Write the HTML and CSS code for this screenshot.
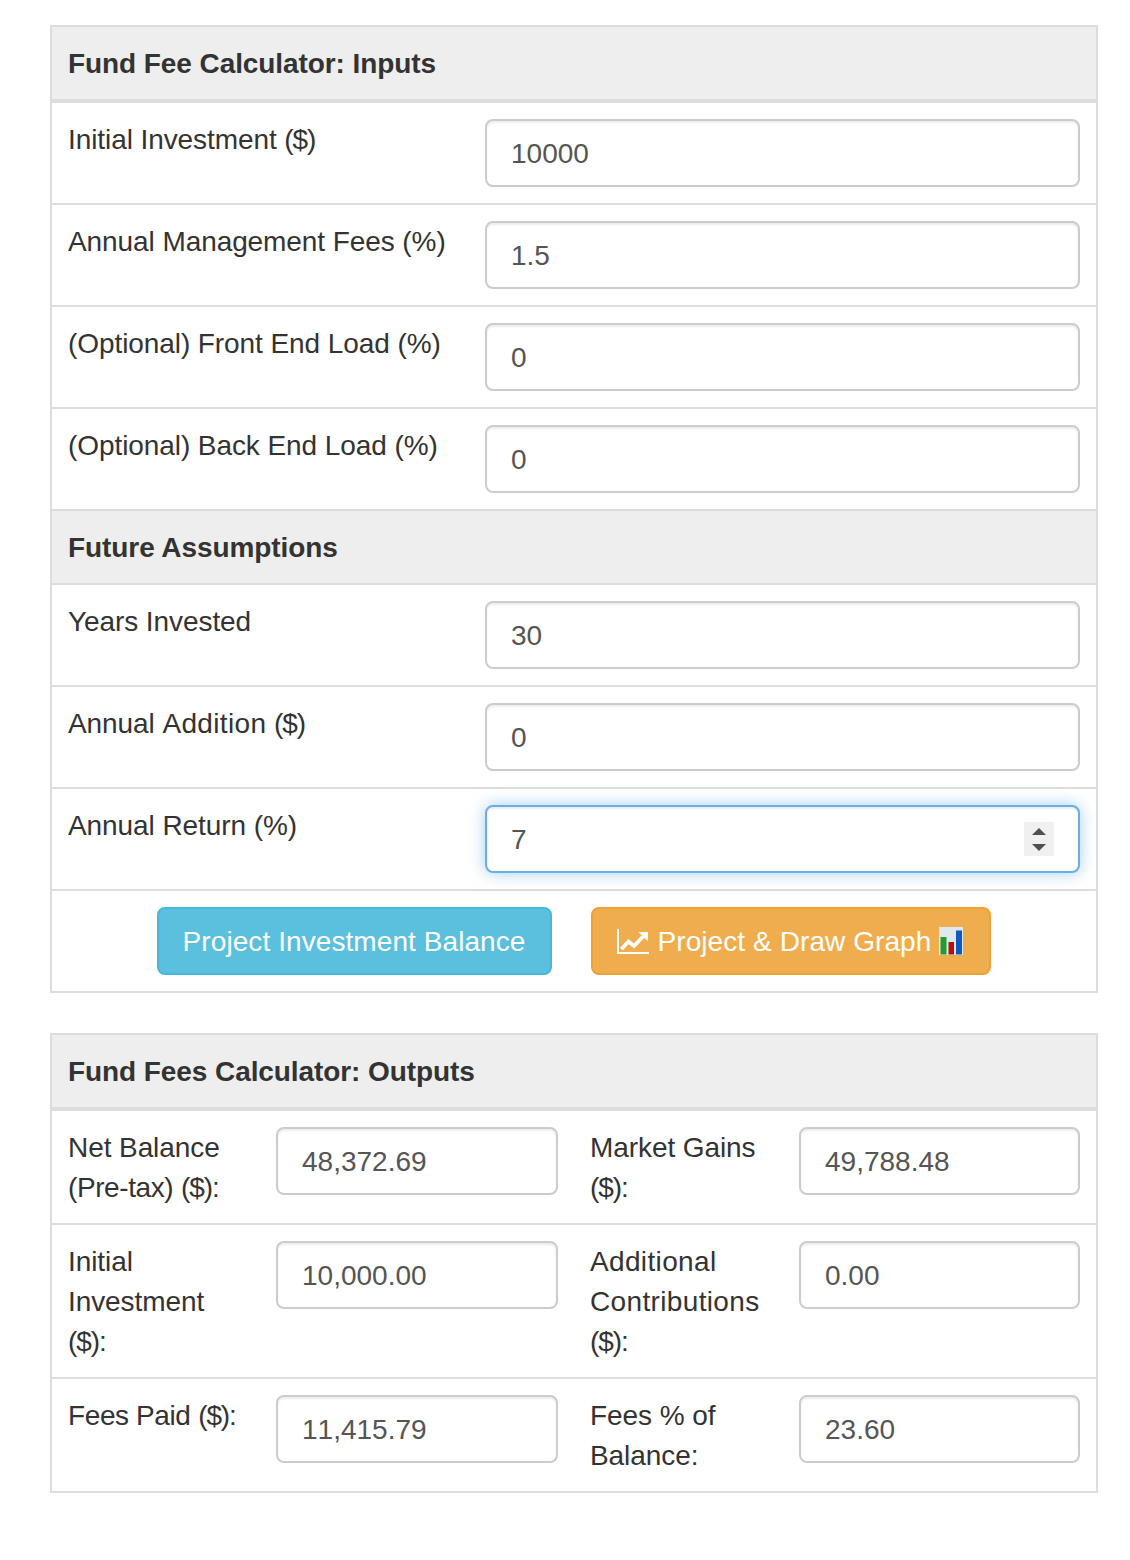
FILE: index.html
```html
<!DOCTYPE html>
<html lang="en">
<head>
<meta charset="utf-8">
<title>Fund Fee Calculator</title>
<link rel="stylesheet" href="styles.css">
</head>
<body>
<main class="page">
  <section class="panel">
    <h2 class="head head-main">Fund Fee Calculator: Inputs</h2>
    <div class="row"><label class="label">Initial Investment <span class="sym">($)</span></label><div class="field"><input class="input" value="10000"></div></div>
    <div class="row"><label class="label">Annual Management Fees (%)</label><div class="field"><input class="input" value="1.5"></div></div>
    <div class="row"><label class="label">(Optional) Front End Load (%)</label><div class="field"><input class="input" value="0"></div></div>
    <div class="row"><label class="label">(Optional) Back End Load (%)</label><div class="field"><input class="input" value="0"></div></div>
    <h2 class="head head-sub">Future Assumptions</h2>
    <div class="row"><label class="label">Years Invested</label><div class="field"><input class="input" value="30"></div></div>
    <div class="row"><label class="label">Annual <span class="wide">Addition</span> <span class="sym">($)</span></label><div class="field"><input class="input" value="0"></div></div>
    <div class="row"><label class="label">Annual Return (%)</label>
      <div class="field spin-wrap"><input class="input is-focus" value="7">
        <span class="spin"><svg width="30" height="34" viewBox="0 0 30 34"><path d="M8 13 15 6l7 7z" fill="#505050"/><path d="M8 22h14l-7 7z" fill="#505050"/></svg></span>
      </div>
    </div>
    <div class="actions">
      <button class="btn btn-info">Project Investment Balance</button>
      <button class="btn btn-warn">
        <svg class="chart" width="32" height="25" viewBox="0 0 32 25"><path d="M1 0v24h31" fill="none" stroke="#fff" stroke-width="2"/><path d="M4.500 20 11.500 12.500l5.500 4.500L26 7.500" fill="none" stroke="#fff" stroke-width="3.800"/><path d="M21.500 3h9.500v9.500z" fill="#fff"/></svg>
        <span>Project &amp; Draw Graph</span>
        <svg class="bars" width="24" height="28" viewBox="0 0 24 28"><rect width="24" height="28" fill="#dfe8ee"/><rect x="1.500" y="10" width="6" height="17.500" fill="#1f9e2f"/><rect x="9.500" y="15" width="5.500" height="12.500" fill="#b80f0f"/><rect x="17" y="3.500" width="6" height="24" fill="#1258c0"/></svg>
      </button>
    </div>
  </section>

  <section class="panel panel-out">
    <h2 class="head head-main">Fund Fees Calculator: Outputs</h2>
    <div class="row row-out">
      <label class="label">Net Balance <span class="narrow">(Pre-tax)</span> <span class="sym">($)</span>:</label><div class="field"><input class="input" value="48,372.69"></div>
      <label class="label">Market Gains <span class="sym">($)</span>:</label><div class="field"><input class="input" value="49,788.48"></div>
    </div>
    <div class="row row-out">
      <label class="label">Initial Investment <span class="sym">($)</span>:</label><div class="field"><input class="input" value="10,000.00"></div>
      <label class="label"><span class="wide">Additional</span> <span class="wide">Contributions</span> <span class="sym">($)</span>:</label><div class="field"><input class="input" value="0.00"></div>
    </div>
    <div class="row row-out row-last">
      <label class="label"><span class="narrow">Fees Paid</span> <span class="sym">($)</span>:</label><div class="field"><input class="input" value="11,415.79"></div>
      <label class="label">Fees % of Balance:</label><div class="field"><input class="input" value="23.60"></div>
    </div>
  </section>
</main>
</body>
</html>
```
FILE: styles.css
```css
* { box-sizing: border-box; }
html, body { margin: 0; background: #fff; }
body {
  font-family: "Liberation Sans", Arial, sans-serif;
  font-size: 28px;
  line-height: 40px;
  color: #333;
}
.page { padding: 25px 32px 0 50px; }
.panel { border: 2px solid #ddd; }
.panel-out { margin-top: 40px; }
.head {
  margin: 0;
  padding: 17px 16px 15px;
  font-size: 28px;
  line-height: 40px;
  font-weight: 700;
  letter-spacing: -0.08px;
  background: #eee;
  height: 76px;
}
.head-main { border-bottom: 4px solid #ddd; }
.head-sub { height: 74px; border-bottom: 2px solid #ddd; }
.row {
  display: grid;
  grid-template-columns: 417px 627px;
  border-bottom: 2px solid #ddd;
}
.row-out { grid-template-columns: 208px 314px 209px 313px; }
.row-last { border-bottom: 0; }
.label { display: block; padding: 17px 16px 15px; letter-spacing: -0.08px; }
.sym { letter-spacing: -1.1px; }
.wide { letter-spacing: 0.35px; }
.narrow { letter-spacing: -0.4px; }
.field { padding: 16px; }
.input {
  display: block;
  width: 100%;
  height: 68px;
  padding: 13px 24px 11px;
  font: inherit;
  font-kerning: none;
  color: #555;
  background: #fff;
  border: 2px solid #ccc;
  border-radius: 8px;
  box-shadow: inset 0 2px 2px rgba(0,0,0,.075);
  outline: 0;
}
.is-focus {
  border-color: #66afe9;
  box-shadow: inset 0 2px 2px rgba(0,0,0,.075), 0 0 16px rgba(102,175,233,.6);
}
.spin-wrap { position: relative; }
.spin {
  position: absolute;
  right: 42px;
  top: 33px;
  width: 30px;
  height: 34px;
  background: #f0f0f0;
}
.spin svg { display: block; }
.actions {
  display: flex;
  justify-content: center;
  gap: 39px;
  padding: 16px;
}
.btn {
  display: inline-flex;
  align-items: center;
  height: 68px;
  padding: 13px 24px 11px;
  font: inherit;
  letter-spacing: 0.08px;
  color: #fff;
  border: 2px solid;
  border-radius: 8px;
}
.btn-info { background: #5bc0de; border-color: #46b8da; }
.btn-warn { background: #f0ad4e; border-color: #eea236; padding-right: 26px; }
.chart { margin-right: 9px; flex: none; position: relative; top: -1px; }
.bars { margin-left: 8px; flex: none; position: relative; top: -1px; }
```
